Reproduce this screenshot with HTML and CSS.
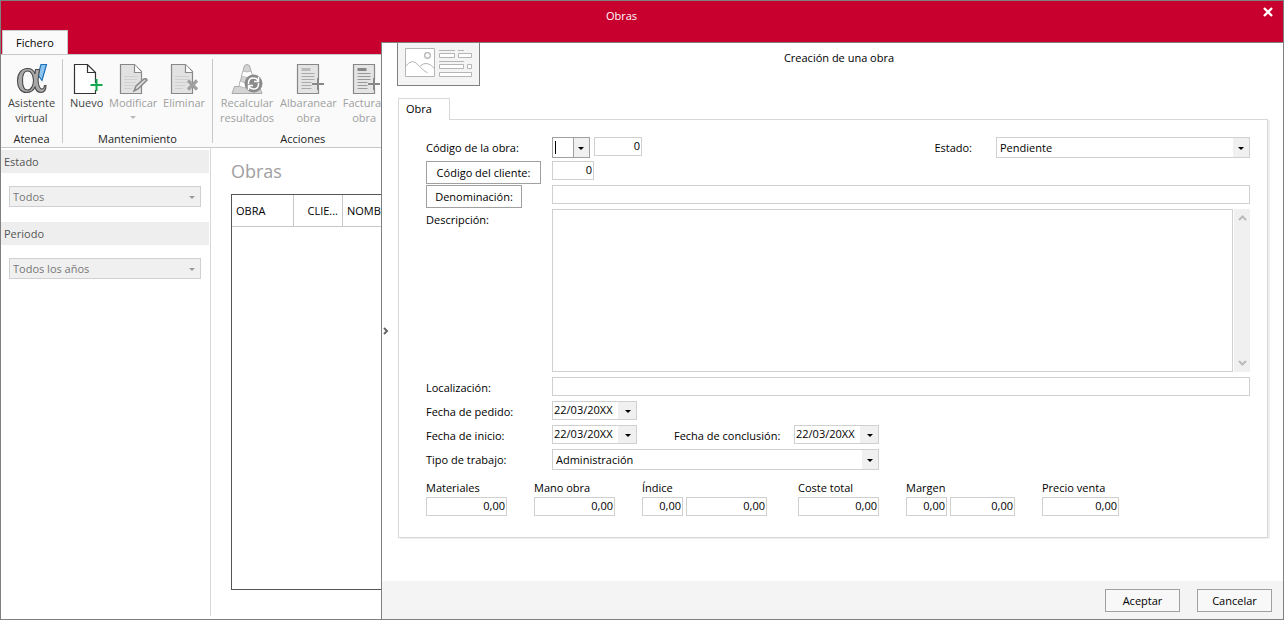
FILE: index.html
```html
<!DOCTYPE html>
<html lang="es">
<head>
<meta charset="utf-8">
<title>Obras</title>
<link rel="stylesheet" href="styles.css">
</head>
<body>
<div class="window">
  <header class="titlebar">
    <h1 class="window-title">Obras</h1>
    <button class="close" type="button" aria-label="Cerrar">
      <svg width="12" height="12" viewBox="0 0 12 12"><path d="M2 2l8 8M10 2l-8 8" stroke="#fff" stroke-width="2.4" fill="none"/></svg>
    </button>
    <button class="ribbon-tab" type="button">Fichero</button>
  </header>

  <nav class="ribbon">
    <section class="group">
      <div class="tools">
        <button class="tool tool-wide" type="button">
          <svg width="32" height="32" viewBox="0 0 32 32" fill="none">
            <path d="M22 12l3-10.500h5.500l-4.500 16z" fill="#8cc4f0" stroke="#1c6fb8" stroke-width="1.200"/>
            <path fill-rule="evenodd" d="M19.500 6.500H23.500L22 17C22.500 23 23.500 26 26 26C27.500 26 28.300 24.500 28.500 22.500H30C30 27 28.500 29.500 25 29.500C21.500 29.500 19.800 27 19 24C17.500 27.500 14.500 29.500 10.500 29.500C5 29.500 1.500 25 1.500 18C1.500 10.500 5.500 5.500 11.500 5.500C15.500 5.500 18 7.500 19 11zM11.500 8C8 8 6.500 11.500 6.500 17.500C6.500 23.500 8 27 11.500 27C15.500 27 17.500 22 17.500 17C17 11.500 15 8 11.500 8z" fill="#aaa" stroke="#4a4a4a" stroke-width="1.100"/>
          </svg>
          <span>Asistente<br>virtual</span>
        </button>
      </div>
      <h2 class="group-name">Atenea</h2>
    </section>
    <section class="group">
      <div class="tools tools-edit">
        <button class="tool" type="button">
          <svg width="32" height="32" viewBox="0 0 32 32" fill="none">
            <path d="M24.500 20V9.500L16.500 1.500H3.500V30.500H24.500V27M16.500 1.500V9.500H24.500" fill="#fff" stroke="#333" stroke-width="1.200"/>
            <path d="M25.500 16v12M19.500 22h12" stroke="#12a84c" stroke-width="2"/>
          </svg>
          <span>Nuevo</span>
        </button>
        <button class="tool" type="button" disabled>
          <svg width="32" height="32" viewBox="0 0 32 32" fill="none">
            <path d="M24.500 30.500H3.500V1.500H17.500L24.500 8.500z" fill="#e2e2e2" stroke="#888" stroke-width="1.200"/>
            <path d="M17.500 1.500V9.500H24.500" fill="#fff" stroke="#888" stroke-width="1.200"/>
            <path d="M7 13.500h14M7 16.500h13M7 19.500h12M7 22.500h10M7 25.500h8" stroke="#d0d0d0"/>
            <path d="M17 28l2-5 8-7q2-1 3 1l-9 9z" fill="#ddd" stroke="#888" stroke-width="1.500"/>
          </svg>
          <span>Modificar</span>
          <i class="more"></i>
        </button>
        <button class="tool" type="button" disabled>
          <svg width="32" height="32" viewBox="0 0 32 32" fill="none">
            <path d="M24.500 30.500H3.500V1.500H17.500L24.500 8.500z" fill="#e2e2e2" stroke="#888" stroke-width="1.200"/>
            <path d="M17.500 1.500V9.500H24.500" fill="#fff" stroke="#888" stroke-width="1.200"/>
            <path d="M7 13.500h14M7 16.500h13M7 19.500h12M7 22.500h10M7 25.500h8" stroke="#d0d0d0"/>
            <path d="M20 17.500l9 9M29 17.500l-9 9" stroke="#a0a0a0" stroke-width="3.200"/>
          </svg>
          <span>Eliminar</span>
        </button>
      </div>
      <h2 class="group-name">Mantenimiento</h2>
    </section>
    <section class="group">
      <div class="tools tools-actions">
        <button class="tool tool-wide" type="button" disabled>
          <svg width="32" height="32" viewBox="0 0 32 32" fill="none">
            <path d="M1 30.500L3.500 23.500H8L13.500 2.500Q16 .5 18.500 2.500L24 23.500H28.500L31 30.500z" fill="#d4d4d4" stroke="#aaa"/>
            <path d="M12 8q4 2 8 0l1.500 5q-6 3-11 0zM9 18q7 4 14 0l1 5q-8 4-16 0z" fill="#fff" stroke="#b0b0b0" stroke-width=".8"/>
            <circle cx="22.500" cy="20.500" r="9" fill="#8b8b8b"/>
            <path d="M17.500 21v-1q0-5 5-5q3 0 4.500 2.500M27.500 20v1q0 5-5 5q-3 0-4.500-2.500M27.500 14v4.500h-4.500M17.500 27v-4.500h4.500" stroke="#fff" stroke-width="1.500"/>
          </svg>
          <span>Recalcular<br>resultados</span>
        </button>
        <button class="tool tool-wide" type="button" disabled>
          <svg width="32" height="32" viewBox="0 0 32 32" fill="none">
            <path d="M26.500 17V1.500H5.500V30.500H26.500V25" fill="#e4e4e4" stroke="#888" stroke-width="1.200"/>
            <path d="M9.500 6.500h9" stroke="#bbb" stroke-width="3"/>
            <path d="M9.500 10.500h13M9.500 13.500h13M9.500 16.500h13M9.500 19.500h10M9.500 22.500h10M9.500 25.500h10" stroke="#aaa"/>
            <path d="M26 15v12M20 21h12" stroke="#888" stroke-width="2"/>
          </svg>
          <span>Albaranear<br>obra</span>
        </button>
        <button class="tool tool-wide" type="button" disabled>
          <svg width="32" height="32" viewBox="0 0 32 32" fill="none">
            <path d="M26.500 17V1.500H5.500V30.500H26.500V25" fill="#e4e4e4" stroke="#888" stroke-width="1.200"/>
            <path d="M9.500 6.500h9" stroke="#888" stroke-width="3"/>
            <path d="M9.500 10.500h13M9.500 13.500h13M9.500 16.500h13M9.500 19.500h10M9.500 22.500h10M9.500 25.500h10" stroke="#999"/>
            <path d="M26 15v12M20 21h12" stroke="#888" stroke-width="2"/>
          </svg>
          <span>Facturar<br>obra</span>
        </button>
      </div>
      <h2 class="group-name">Acciones</h2>
    </section>
  </nav>

  <main class="workspace">
    <aside class="sidebar">
      <label class="filter-title" for="f-estado">Estado</label>
      <div class="pick filter"><select id="f-estado" disabled><option>Todos</option></select></div>
      <label class="filter-title" for="f-periodo">Periodo</label>
      <div class="pick filter"><select id="f-periodo" disabled><option>Todos los años</option></select></div>
    </aside>
    <section class="listing">
      <h2 class="listing-title">Obras</h2>
      <div class="list">
        <table>
          <thead><tr><th class="c-obra">OBRA</th><th class="c-cli">CLIE...</th><th>NOMBRE</th></tr></thead>
        </table>
      </div>
    </section>
  </main>

  <form class="panel">
    <button class="collapse" type="button" aria-label="Contraer">
      <svg width="6" height="8" viewBox="0 0 6 8"><path d="M1 1l3 3-3 3" fill="none" stroke="#666" stroke-width="2"/></svg>
    </button>
    <div class="panel-main">
      <div class="panel-head">
        <div class="thumb">
          <svg width="70" height="32" viewBox="0 0 70 32" fill="none" stroke="#b5b5b5">
            <path d="M1.500 3.500h29v28H1.500z" fill="#fff"/>
            <circle cx="23.500" cy="10.500" r="2.800" stroke-width="1.300"/>
            <path d="M1.500 21.500q7-10 14 0q4 4 8 6.500M16 21q7-6 14 2"/>
            <path d="M35 5.500h16M54 5.500h6M35 16.500h25"/>
            <path d="M35.500 8.500h15v4h-15zM54.500 8.500h13v4h-13zM35.500 19.500h24v4h-24zM63.500 19.500h4v4h-4zM35.500 27.500h32v4h-32z" fill="#fff"/>
          </svg>
        </div>
        <h2 class="panel-title">Creación de una obra</h2>
      </div>
      <button class="page-tab" type="button">Obra</button>
      <div class="page">
        <div class="fields">
          <label for="serie">Código de la obra:</label>
          <div class="row">
            <div class="pick combo focus"><input id="serie" type="text"><span class="caret"></span></div>
            <input class="num w48" type="text" value="0" aria-label="Número de obra">
            <label class="push" for="estado">Estado:</label>
            <div class="pick state"><select id="estado"><option>Pendiente</option></select></div>
          </div>

          <button class="link-button" type="button">Código del cliente:</button>
          <div class="row"><input class="num w42" type="text" value="0" aria-label="Código del cliente"></div>

          <button class="link-button narrow" type="button">Denominación:</button>
          <div class="row"><input class="full" type="text" aria-label="Denominación"></div>

          <label for="desc">Descripción:</label>
          <div class="memo">
            <textarea id="desc"></textarea>
            <div class="scroll">
              <svg width="9" height="7" viewBox="0 0 9 7"><path d="M1 6l3.500-3.500L8 6" fill="none" stroke="#bbb" stroke-width="2"/></svg>
              <svg width="9" height="7" viewBox="0 0 9 7"><path d="M1 1l3.500 3.500L8 1" fill="none" stroke="#bbb" stroke-width="2"/></svg>
            </div>
          </div>

          <label for="loc">Localización:</label>
          <div class="row"><input id="loc" class="full" type="text"></div>

          <label for="pedido">Fecha de pedido:</label>
          <div class="row"><div class="pick date"><input id="pedido" type="text" value="22/03/20XX"></div></div>

          <label for="inicio">Fecha de inicio:</label>
          <div class="row">
            <div class="pick date"><input id="inicio" type="text" value="22/03/20XX"></div>
            <label class="end-label" for="fin">Fecha de conclusión:</label>
            <div class="pick date"><input id="fin" type="text" value="22/03/20XX"></div>
          </div>

          <label for="tipo">Tipo de trabajo:</label>
          <div class="row"><div class="pick kind"><select id="tipo"><option>Administración</option></select></div></div>
        </div>

        <div class="totals">
          <div class="total"><label for="mat">Materiales</label><div class="pair"><input id="mat" class="num w81" type="text" value="0,00"></div></div>
          <div class="total"><label for="mano">Mano obra</label><div class="pair"><input id="mano" class="num w81" type="text" value="0,00"></div></div>
          <div class="total wide-gap"><label for="ind">Índice</label><div class="pair"><input id="ind" class="num w41" type="text" value="0,00"><input class="num w81" type="text" value="0,00" aria-label="Importe del índice"></div></div>
          <div class="total"><label for="coste">Coste total</label><div class="pair"><input id="coste" class="num w81" type="text" value="0,00"></div></div>
          <div class="total"><label for="mar">Margen</label><div class="pair"><input id="mar" class="num w41" type="text" value="0,00"><input class="num w65" type="text" value="0,00" aria-label="Importe del margen"></div></div>
          <div class="total"><label for="venta">Precio venta</label><div class="pair"><input id="venta" class="num w77" type="text" value="0,00"></div></div>
        </div>
      </div>
    </div>
    <footer class="panel-foot">
      <button class="action" type="submit">Aceptar</button>
      <button class="action" type="button">Cancelar</button>
    </footer>
  </form>
</div>
</body>
</html>
```
FILE: styles.css
```css
* { box-sizing: border-box; }
body { margin: 0; font: 11px/15px "Open Sans", "Noto Sans", sans-serif; color: #000; background: #fff; }
h1, h2 { margin: 0; font: inherit; }
button, input, select, textarea { font: inherit; color: inherit; margin: 0; border-radius: 0; outline: 0; }
button { padding: 0; border: 0; background: none; }
svg { display: block; }

.window { position: relative; min-height: 100vh; display: flex; flex-direction: column; border: 1px solid #808080; overflow: hidden; }

.titlebar { display: grid; grid-template-columns: 80px 1fr 80px; grid-template-rows: 29px 24px; background: #c8002d; color: #fff; }
.window-title { grid-column: 2; text-align: center; padding-top: 7px; padding-right: 41px; }
.close { grid-column: 3; justify-self: end; align-self: start; margin: 5px 9px 0 0; }
.ribbon-tab { grid-column: 1; grid-row: 2; width: 66px; padding-bottom: 2px; border: solid #c8c8c8; border-width: 1px 1px 0; background: #fafafa; color: #000; margin: 0 0 -1px 1px; }

.ribbon { display: flex; height: 94px; padding: 4px 0; background: #fafafa; border: solid #c8c8c8; border-width: 1px 0; }
.group { display: flex; flex-direction: column; border-right: 1px solid #c8c8c8; }
.group-name { margin-top: auto; text-align: center; color: #222; line-height: 9px; }
.tools { display: flex; padding-top: 4px; }
.tools-edit { width: 149px; justify-content: space-between; padding-left: 7px; padding-right: 7px; }
.tools-actions { gap: 6px; padding-left: 7px; padding-right: 7px; }
.tool { display: flex; flex-direction: column; align-items: center; justify-content: flex-start; color: #444; }
.tool:disabled { color: #a0a0a0; }
.tool-wide { min-width: 61px; }
.tools-actions .tool-wide { min-width: 40px; }
.more { margin-top: 6px; border: 3px solid transparent; border-top-color: #bbb; border-bottom: 0; }

.workspace { flex: 1; display: flex; }
.sidebar { width: 210px; border-right: 1px solid #d8d8d8; margin-bottom: 3px; padding: 2px 1px 0 0; }
.filter-title { display: block; height: 23px; padding: 4px 3px; background: #eee; color: #555; }
.filter { height: 21px; margin: 13px 8px 15px 8px; }
.listing { flex: 1; display: flex; flex-direction: column; padding: 10px 30px 29px 20px; }
.listing-title { font-size: 18px; line-height: 26px; color: #a0a0a0; }
.list { flex: 1; margin-top: 10px; border: 1px solid #555; }
.list table { width: 100%; border-collapse: separate; border-spacing: 0; table-layout: fixed; }
.list th { height: 32px; padding: 0 4px; border-right: 1px solid #c8c8c8; border-bottom: 1px solid #c8c8c8; font-weight: 400; text-align: left; }
.list .c-obra { width: 62px; }
.list .c-cli { width: 49px; text-align: right; }

.pick { position: relative; display: flex; height: 21px; border: 1px solid #d0d0d0; background: #fff; }
.pick select, .pick input { flex: 1; min-width: 0; width: 100%; height: 100%; padding: 0 20px 0 3px; border: 0; background: linear-gradient(#f0f0f0, #f0f0f0) right / 16px 100% no-repeat; appearance: none; }
.pick select { opacity: 1; }
.pick::after { content: ""; position: absolute; right: 5px; top: 50%; margin-top: -1px; border: 3px solid transparent; border-top-color: #000; border-bottom: 0; pointer-events: none; }
.filter select { background: #f0f0f0; color: #777; }
.filter::after { border-top-color: #999; }

.panel { position: absolute; top: 41px; right: 0; bottom: 0; left: 380px; display: flex; flex-direction: column; background: #fff; border: solid #808080; border-width: 1px 0 0 1px; }
.panel-main { flex: 1; padding: 0 15px 0 16px; }
.collapse { position: absolute; left: 1px; top: 50%; transform: translateY(-50%); }
.panel-head { display: grid; grid-template-columns: 83px 1fr 70px; height: 55px; margin-left: -1px; }
.thumb { height: 43px; padding: 2px 6px; background: #f4f4f4; border: solid #808080; border-width: 0 1px 1px; }
.panel-title { text-align: center; padding-top: 7px; }
.page-tab { display: block; position: relative; width: 52px; height: 22px; margin-bottom: -1px; padding: 0 10px 2px 0; border: solid #d8d8d8; border-width: 1px 1px 0; background: #fff; }
.page { padding: 17px 17px 21px 27px; border: 1px solid #d8d8d8; box-shadow: 2px 1px 0 #f0f0f0; }

.fields { display: grid; grid-template-columns: 126px 1fr; grid-template-rows: 24px 24px 24px 168px repeat(4, 24px); align-items: start; }
.fields label { padding-top: 4px; line-height: 14px; white-space: nowrap; }
.row { display: flex; align-items: flex-start; }
.row > input, .pair input { height: 19px; border: 1px solid #d0d0d0; padding: 0 1px 2px; }
.num { text-align: right; }
.row .full { flex: 1; min-width: 0; }
.w41 { width: 41px; }
.w42 { width: 42px; }
.w48 { width: 48px; margin-left: 4px; }
.w65 { width: 65px; }
.w77 { width: 77px; }
.w81 { width: 81px; }
.combo { width: 38px; }
.focus { border-color: #a0a0a0; }
.focus input { border-right: 0; background-image: linear-gradient(90deg, #a0a0a0 1px, #f0f0f0 1px); }
.caret { position: absolute; left: 2px; top: 3px; width: 1px; height: 13px; background: #000; }
.row .push { margin-left: auto; }
.state { width: 254px; margin-left: 24px; }
.date { width: 85px; height: 19px; }
.date input { padding: 0 18px 2px 1px; background-size: 18px 100%; }
.row .end-label { width: 120px; margin-left: 37px; }
.kind { width: 327px; }
.link-button { justify-self: start; height: 23px; width: 115px; border: 1px solid #a0a0a0; background: #fff; }
.narrow { width: 96px; }
.memo { display: flex; height: 163px; gap: 1px; }
.memo textarea { flex: 1; resize: none; border: 1px solid #d0d0d0; }
.scroll { width: 16px; display: flex; flex-direction: column; justify-content: space-between; align-items: center; padding: 5px 0; background: #f0f0f0; }

.totals { display: flex; gap: 27px; margin-top: 7px; }
.total { display: flex; flex-direction: column; }
.total label { line-height: 16px; }
.wide-gap { margin-right: 4px; }
.pair { display: flex; gap: 3px; margin-top: 1px; }

.panel-foot { display: flex; justify-content: flex-end; gap: 17px; height: 38px; padding: 8px 11px 0; background: #f4f4f4; }
.action { width: 75px; height: 23px; border: 1px solid #a0a0a0; background: #f8f8f8; }
```
